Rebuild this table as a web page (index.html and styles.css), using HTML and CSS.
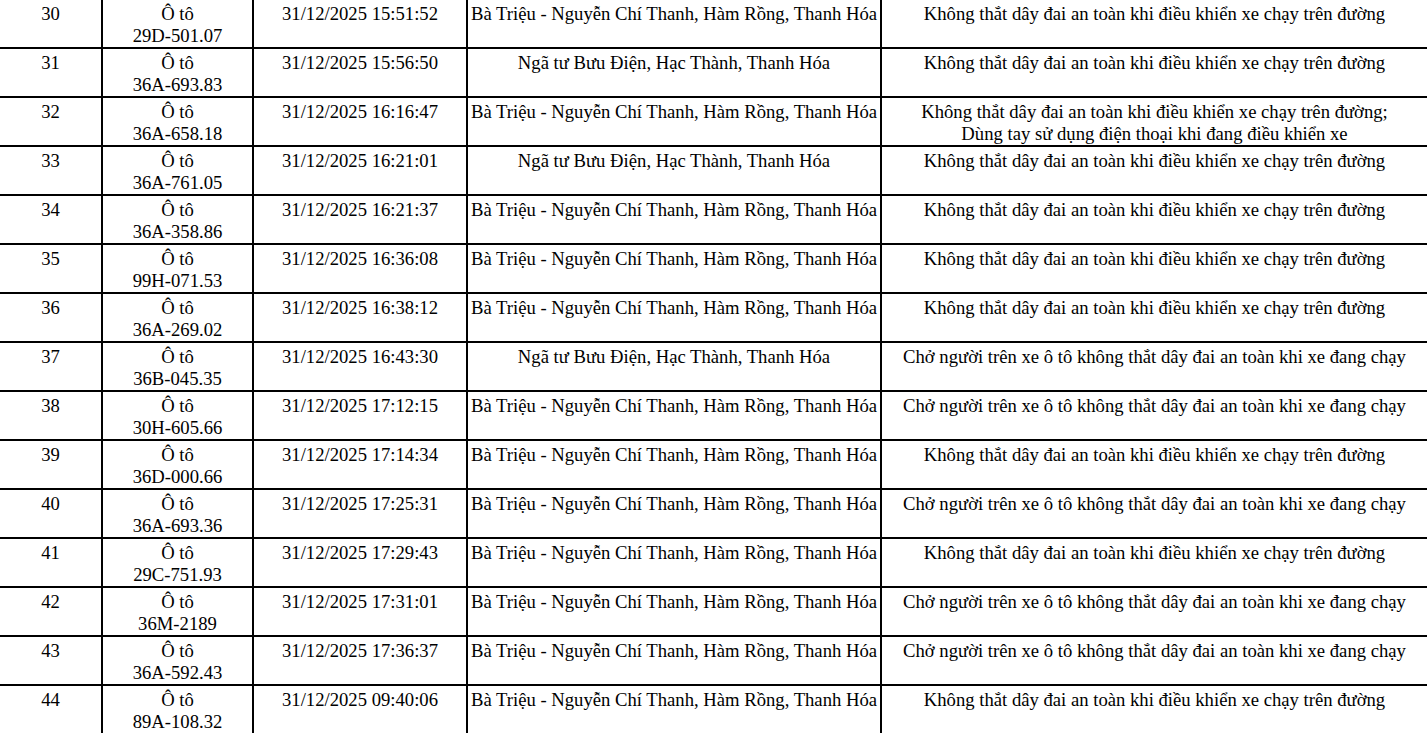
FILE: index.html
```html
<!DOCTYPE html>
<html lang="vi">
<head>
<meta charset="utf-8">
<title>Danh sách vi phạm</title>
<link rel="stylesheet" href="styles.css">
</head>
<body>
<table class="violations">
<colgroup>
<col class="c-no"><col class="c-veh"><col class="c-time"><col class="c-place"><col class="c-act">
</colgroup>
<tbody>
<tr><td>30</td><td>Ô tô<br>29D-501.07</td><td>31/12/2025 15:51:52</td><td>Bà Triệu - Nguyễn Chí Thanh, Hàm Rồng, Thanh Hóa</td><td>Không thắt dây đai an toàn khi điều khiển xe chạy trên đường</td></tr>
<tr><td>31</td><td>Ô tô<br>36A-693.83</td><td>31/12/2025 15:56:50</td><td>Ngã tư Bưu Điện, Hạc Thành, Thanh Hóa</td><td>Không thắt dây đai an toàn khi điều khiển xe chạy trên đường</td></tr>
<tr><td>32</td><td>Ô tô<br>36A-658.18</td><td>31/12/2025 16:16:47</td><td>Bà Triệu - Nguyễn Chí Thanh, Hàm Rồng, Thanh Hóa</td><td>Không thắt dây đai an toàn khi điều khiển xe chạy trên đường;<br>Dùng tay sử dụng điện thoại khi đang điều khiển xe</td></tr>
<tr><td>33</td><td>Ô tô<br>36A-761.05</td><td>31/12/2025 16:21:01</td><td>Ngã tư Bưu Điện, Hạc Thành, Thanh Hóa</td><td>Không thắt dây đai an toàn khi điều khiển xe chạy trên đường</td></tr>
<tr><td>34</td><td>Ô tô<br>36A-358.86</td><td>31/12/2025 16:21:37</td><td>Bà Triệu - Nguyễn Chí Thanh, Hàm Rồng, Thanh Hóa</td><td>Không thắt dây đai an toàn khi điều khiển xe chạy trên đường</td></tr>
<tr><td>35</td><td>Ô tô<br>99H-071.53</td><td>31/12/2025 16:36:08</td><td>Bà Triệu - Nguyễn Chí Thanh, Hàm Rồng, Thanh Hóa</td><td>Không thắt dây đai an toàn khi điều khiển xe chạy trên đường</td></tr>
<tr><td>36</td><td>Ô tô<br>36A-269.02</td><td>31/12/2025 16:38:12</td><td>Bà Triệu - Nguyễn Chí Thanh, Hàm Rồng, Thanh Hóa</td><td>Không thắt dây đai an toàn khi điều khiển xe chạy trên đường</td></tr>
<tr><td>37</td><td>Ô tô<br>36B-045.35</td><td>31/12/2025 16:43:30</td><td>Ngã tư Bưu Điện, Hạc Thành, Thanh Hóa</td><td>Chở người trên xe ô tô không thắt dây đai an toàn khi xe đang chạy</td></tr>
<tr><td>38</td><td>Ô tô<br>30H-605.66</td><td>31/12/2025 17:12:15</td><td>Bà Triệu - Nguyễn Chí Thanh, Hàm Rồng, Thanh Hóa</td><td>Chở người trên xe ô tô không thắt dây đai an toàn khi xe đang chạy</td></tr>
<tr><td>39</td><td>Ô tô<br>36D-000.66</td><td>31/12/2025 17:14:34</td><td>Bà Triệu - Nguyễn Chí Thanh, Hàm Rồng, Thanh Hóa</td><td>Không thắt dây đai an toàn khi điều khiển xe chạy trên đường</td></tr>
<tr><td>40</td><td>Ô tô<br>36A-693.36</td><td>31/12/2025 17:25:31</td><td>Bà Triệu - Nguyễn Chí Thanh, Hàm Rồng, Thanh Hóa</td><td>Chở người trên xe ô tô không thắt dây đai an toàn khi xe đang chạy</td></tr>
<tr><td>41</td><td>Ô tô<br>29C-751.93</td><td>31/12/2025 17:29:43</td><td>Bà Triệu - Nguyễn Chí Thanh, Hàm Rồng, Thanh Hóa</td><td>Không thắt dây đai an toàn khi điều khiển xe chạy trên đường</td></tr>
<tr><td>42</td><td>Ô tô<br>36M-2189</td><td>31/12/2025 17:31:01</td><td>Bà Triệu - Nguyễn Chí Thanh, Hàm Rồng, Thanh Hóa</td><td>Chở người trên xe ô tô không thắt dây đai an toàn khi xe đang chạy</td></tr>
<tr><td>43</td><td>Ô tô<br>36A-592.43</td><td>31/12/2025 17:36:37</td><td>Bà Triệu - Nguyễn Chí Thanh, Hàm Rồng, Thanh Hóa</td><td>Chở người trên xe ô tô không thắt dây đai an toàn khi xe đang chạy</td></tr>
<tr><td>44</td><td>Ô tô<br>89A-108.32</td><td>31/12/2025 09:40:06</td><td>Bà Triệu - Nguyễn Chí Thanh, Hàm Rồng, Thanh Hóa</td><td>Không thắt dây đai an toàn khi điều khiển xe chạy trên đường</td></tr>
</tbody>
</table>
</body>
</html>
```

FILE: styles.css
```css
html, body {
  margin: 0;
  padding: 0;
  background: #fff;
  overflow: hidden;
}

.violations {
  margin: -2px 0 0 -2px;
  width: 1429px;
  border-collapse: collapse;
  table-layout: fixed;
  font-family: "Liberation Serif", "Times New Roman", serif;
  font-size: 18.67px;
  line-height: 21.5px;
  color: #000;
}

.c-no { width: 103px; }
.c-veh { width: 151px; }
.c-time { width: 214px; }
.c-place { width: 414px; }
.c-act { width: 547px; }

.violations td {
  border: 2px solid #000;
  height: 49px;
  padding: 3px 2px 0;
  text-align: center;
  vertical-align: top;
  box-sizing: border-box;
  white-space: nowrap;
}
```
